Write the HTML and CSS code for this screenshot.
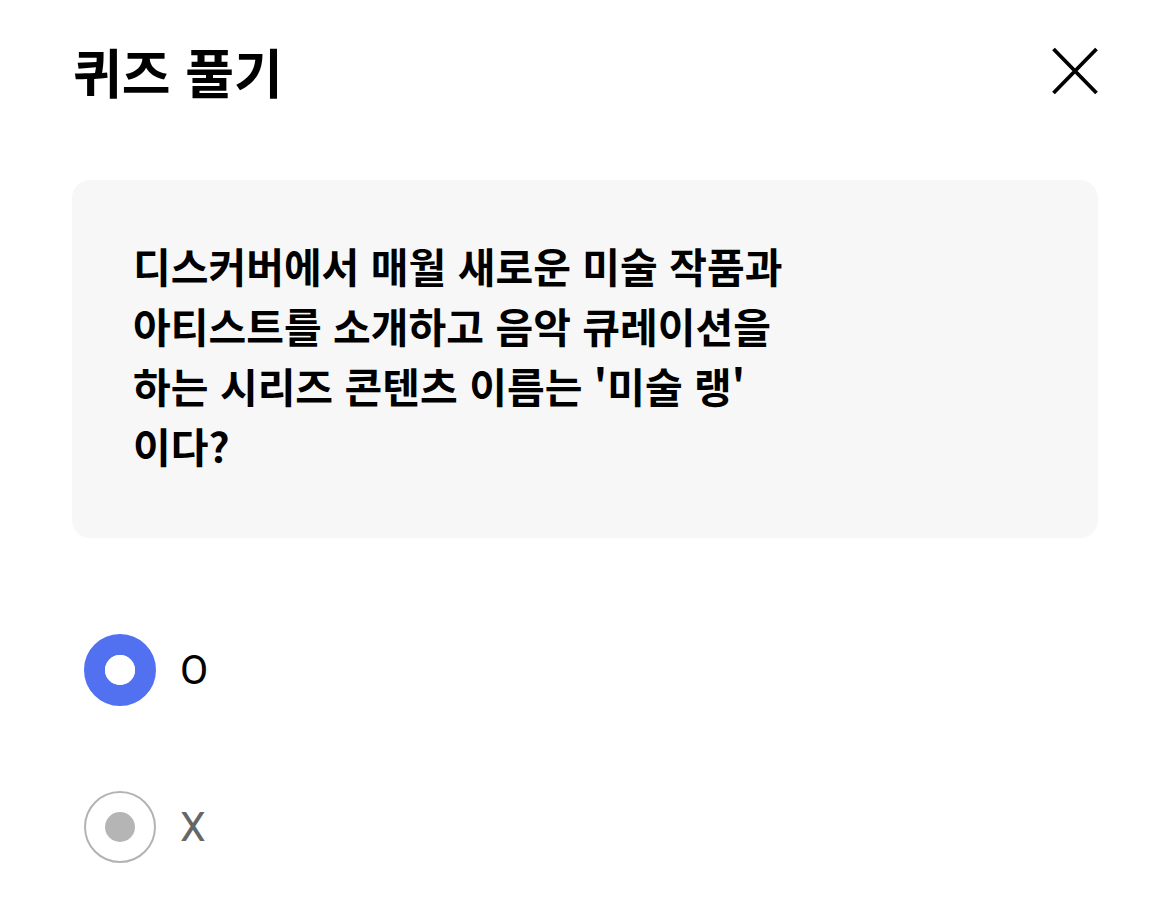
FILE: index.html
```html
<!DOCTYPE html>
<html lang="ko">
<head>
<meta charset="utf-8">
<title>퀴즈 풀기</title>
<link rel="stylesheet" href="styles.css">
</head>
<body>
<div class="page">
  <header class="header">
    <h1 class="title">퀴즈 풀기</h1>
    <button class="close" aria-label="닫기">
      <svg width="48" height="48" viewBox="0 0 48 48"><path d="M2.5 2 L45.5 46 M45.5 2 L2.5 46" stroke="#000" stroke-width="3.8" fill="none"/></svg>
    </button>
  </header>
  <section class="card">
    <p class="question">디스커버에서 매월 새로운 미술 작품과<br>아티스트를 소개하고 음악 큐레이션을<br>하는 시리즈 콘텐츠 이름는 '미술 랭'<br>이다?</p>
  </section>
  <div class="options">
    <label class="option selected"><span class="radio"></span><span class="label">O</span></label>
    <label class="option"><span class="radio"></span><span class="label">X</span></label>
  </div>
</div>
</body>
</html>
```
FILE: styles.css
```css
html, body {
  margin: 0;
  padding: 0;
  background: #fff;
}
body {
  font-family: "Noto Sans CJK KR", "Noto Sans", sans-serif;
  color: #000;
}
.page {
  padding: 0 72px;
}
.header {
  display: flex;
  align-items: center;
  justify-content: space-between;
  height: 142px;
  margin-bottom: 38px;
}
.title {
  margin: 0 0 0 1px;
  font-size: 53px;
  font-weight: 700;
  letter-spacing: 0;
}
.close {
  border: 0;
  background: none;
  padding: 0;
  margin-right: -1px;
  width: 48px;
  height: 48px;
  display: flex;
}
.card {
  background: #f7f7f7;
  border-radius: 18px;
  height: 358px;
  padding: 55px 61px;
  box-sizing: border-box;
}
.question {
  margin: 0;
  font-size: 41px;
  font-weight: 700;
  line-height: 60px;
  letter-spacing: 0;
}
.options {
  display: flex;
  flex-direction: column;
  gap: 85px;
  padding-top: 96px;
}
.option {
  display: flex;
  align-items: center;
  gap: 24px;
  padding-left: 12px;
}
.radio {
  width: 72px;
  height: 72px;
  border-radius: 50%;
  box-sizing: border-box;
  border: 2px solid #b3b3b3;
  display: flex;
  align-items: center;
  justify-content: center;
}
.radio::after {
  content: "";
  width: 30px;
  height: 30px;
  border-radius: 50%;
  background: #b5b5b5;
}
.option.selected .radio {
  border: 21px solid #5271f0;
}
.option.selected .radio::after {
  background: #fff;
}
.label {
  font-family: Roboto, "Noto Sans", sans-serif;
  font-size: 41px;
  color: #666;
}
.option.selected .label {
  color: #000;
}
```
